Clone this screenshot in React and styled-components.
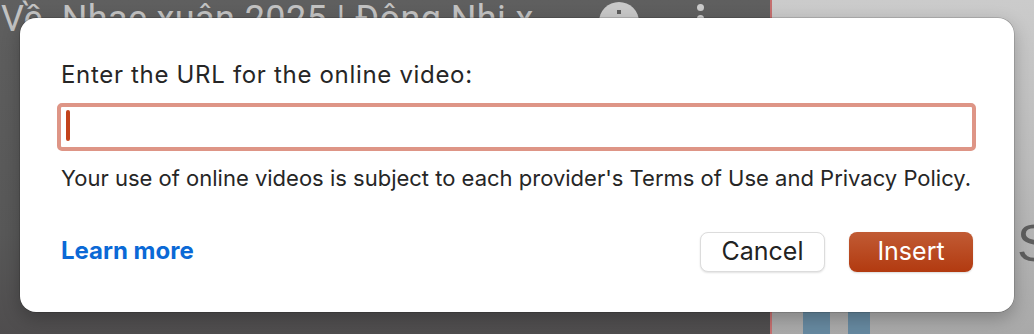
import React from 'react'
import styled, { createGlobalStyle } from 'styled-components'

const GlobalStyle = createGlobalStyle`
  html, body {
    margin: 0;
    padding: 0;
    overflow: hidden;
  }
  body {
    font-family: Inter, "Open Sans", "Liberation Sans", sans-serif;
    -webkit-font-smoothing: antialiased;
  }
`

const Screen = styled.div`
  position: relative;
  width: 1034px;
  height: 334px;
  display: grid;
  grid-template-columns: 770px 2px 1fr;
  overflow: hidden;
`

const Player = styled.div`
  background: linear-gradient(180deg, #5f5f5f 0%, #585858 70%, #4f4d4e 100%);
  display: flex;
  align-items: flex-start;
  padding: 0 66px 0 1px;
`

const VideoTitle = styled.div`
  font-family: Roboto, "Liberation Sans", sans-serif;
  font-size: 36px;
  color: #c2c2c2;
  line-height: 1;
  margin-top: 1px;
  white-space: pre;
  letter-spacing: 0.4px;
`

const PlayerIcons = styled.div`
  margin-left: auto;
  display: flex;
  align-items: flex-start;
  gap: 58px;
`

const InfoIcon = styled.div`
  width: 40px;
  height: 40px;
  margin-top: 2px;
  border-radius: 50%;
  background: #c8c8c8;
  display: flex;
  justify-content: center;
  padding-top: 8px;
  box-sizing: border-box;
  &::before {
    content: '';
    width: 4px;
    height: 4px;
    background: #5e5e5e;
  }
`

const MoreIcon = styled.div`
  display: flex;
  flex-direction: column;
  gap: 4px;
  margin-top: 4px;
  span {
    width: 7px;
    height: 7px;
    border-radius: 50%;
    background: #cacaca;
  }
`

const Divider = styled.div`
  background: #c46f6f;
`

const SidePane = styled.div`
  background: linear-gradient(180deg, #cbcbcb 0%, #bdbdbd 50%, #a9a9a9 100%);
  display: flex;
  flex-direction: column;
  justify-content: flex-end;
  padding-left: 31px;
  position: relative;
`

const BigLetter = styled.div`
  position: absolute;
  left: 245px;
  top: 217px;
  font-family: "Liberation Sans", sans-serif;
  font-size: 52px;
  line-height: 1;
  color: #5e5e5e;
`

const Bars = styled.div`
  display: flex;
  gap: 18px;
  height: 22px;
`

const Bar = styled.div`
  width: ${p => p.$w}px;
  background: #6689a0;
`

const Dialog = styled.div`
  position: absolute;
  left: 20px;
  top: 18px;
  width: 994px;
  height: 294px;
  box-sizing: border-box;
  background: #ffffff;
  border-radius: 16px;
  box-shadow: 0 0 0 0.5px rgba(0, 0, 0, 0.25), 0 6px 18px rgba(0, 0, 0, 0.25);
  padding: 43px 40px 0 41px;
  display: flex;
  flex-direction: column;
`

const Heading = styled.div`
  font-size: 24px;
  line-height: 28px;
  color: #262626;
  letter-spacing: 0.68px;
`

const UrlField = styled.div`
  margin: 14px 0 0 -4px;
  width: 919px;
  height: 48px;
  box-sizing: border-box;
  border: 4px solid #de9586;
  border-radius: 5px;
  background: #fff;
  padding: 3px 0 0 5px;
`

const Caret = styled.div`
  width: 3.5px;
  height: 31px;
  border-radius: 2px;
  background: #c3421b;
`

const Notice = styled.div`
  margin-top: 14px;
  font-size: 22px;
  line-height: 26px;
  color: #262626;
  white-space: nowrap;
`

const Footer = styled.div`
  margin-top: 41px;
  display: flex;
  align-items: center;
  justify-content: space-between;
  padding-right: 1px;
`

const LearnMore = styled.a`
  font-size: 24px;
  line-height: 28px;
  font-weight: 700;
  color: #0b69d6;
  text-decoration: none;
  margin-bottom: 3px;
`

const Buttons = styled.div`
  display: flex;
  gap: 24px;
`

const Button = styled.button`
  width: ${p => p.$w}px;
  height: 40px;
  border-radius: 8px;
  font-family: inherit;
  font-size: 25px;
  padding: 0 0 2px;
  cursor: pointer;
  border: ${p => (p.$primary ? 'none' : '1px solid #dcdcdc')};
  color: ${p => (p.$primary ? '#ffffff' : '#222222')};
  background: ${p =>
    p.$primary ? 'linear-gradient(180deg, #c15b34 0%, #b23a10 100%)' : '#ffffff'};
  box-shadow: ${p =>
    p.$primary ? '0 1px 2px rgba(0,0,0,0.15)' : '0 1px 2px rgba(0,0,0,0.12)'};
`

export default function App() {
  return (
    <>
      <GlobalStyle />
      <Screen>
        <Player>
          <VideoTitle>{'Về  Nhạc xuân 2025 | Đông Nhi x'}</VideoTitle>
          <PlayerIcons>
            <InfoIcon />
            <MoreIcon>
              <span />
              <span />
              <span />
            </MoreIcon>
          </PlayerIcons>
        </Player>
        <Divider />
        <SidePane>
          <BigLetter>S</BigLetter>
          <Bars>
            <Bar $w={27} />
            <Bar $w={22} />
          </Bars>
        </SidePane>
        <Dialog>
          <Heading>Enter the URL for the online video:</Heading>
          <UrlField>
            <Caret />
          </UrlField>
          <Notice>
            Your use of online videos is subject to each provider's Terms of Use and Privacy Policy.
          </Notice>
          <Footer>
            <LearnMore href="#">Learn more</LearnMore>
            <Buttons>
              <Button $w={125}>Cancel</Button>
              <Button $w={124} $primary>
                Insert
              </Button>
            </Buttons>
          </Footer>
        </Dialog>
      </Screen>
    </>
  )
}
